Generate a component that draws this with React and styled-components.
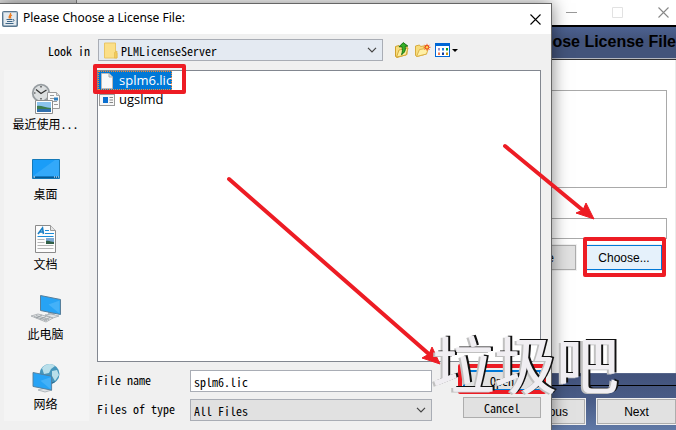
import React from 'react';
import styled, { createGlobalStyle } from 'styled-components';

const GlobalStyle = createGlobalStyle`
  * {
    box-sizing: border-box;
  }
  body {
    margin: 0;
    font-family: "Liberation Sans", "Noto Sans CJK SC", sans-serif;
    font-size: 12px;
    color: #000;
  }
  button, input, select, textarea {
    font: inherit;
    color: inherit;
    margin: 0;
    border-radius: 0;
  }
`;

const Desktop = styled.div`
  position: relative;
  display: flex;
  min-height: 100vh;
  overflow: hidden;
  background: #dcdcdc;
`;

/* installer window */

const Installer = styled.section`
  flex: 1;
  display: flex;
  flex-direction: column;
  margin-left: 76px;
  border-left: 1px solid #8a8a8a;
  background: #fff;
`;

const InstallerBar = styled.div`
  display: flex;
  align-items: center;
  justify-content: flex-end;
  gap: 33px;
  height: 25px;
  padding-right: 6px;
`;

const WindowButton = styled.button`
  display: flex;
  align-items: center;
  justify-content: center;
  width: 13px;
  height: 13px;
  padding: 0;
  border: 0;
  background: none;
`;

const Banner = styled.h1`
  height: 35px;
  margin: 0;
  border-top: 2px solid #000;
  border-bottom: 1px solid #333;
  box-shadow: inset 0 -1px 0 #b5b8c0;
  background: linear-gradient(#4c6190, #43547b 40%, #43547b);
  font-size: 16px;
  line-height: 29px;
  text-align: right;
  white-space: nowrap;
`;

const InstallerMain = styled.div`
  flex: 1;
  padding: 30px 8px 0 9px;
  border-right: 1px solid #ececec;
`;

const Message = styled.textarea`
  display: block;
  width: 100%;
  height: 98px;
  border: 1px solid #a9a9a9;
  background: #fff;
  resize: none;
`;

const PathInput = styled.input`
  display: block;
  width: 100%;
  height: 21px;
  margin-top: 30px;
  border: 1px solid #a9a9a9;
  background: #fff;
`;

const PathActions = styled.div`
  display: flex;
  justify-content: flex-end;
  gap: 10px;
  padding: 6px 5px 0 0;
`;

const InstallerButton = styled.button`
  position: relative;
  min-width: ${(p) => p.$width || 76}px;
  height: 25px;
  padding: 0 ${(p) => p.$pad || 8}px;
  border: 1px solid ${(p) => (p.$active ? '#0078d7' : '#adadad')};
  box-shadow: 0 0 0 1px #f0f0f0;
  background: ${(p) => (p.$active ? '#e5f1fb' : '#e1e1e1')};
  white-space: nowrap;
`;

const InstallerFooter = styled.div`
  height: 57px;
  border-top: 1px solid #56658a;
  background: linear-gradient(#42527b, #4a5d88 50%, #6079a6);
`;

const FooterActions = styled.div`
  display: flex;
  justify-content: flex-end;
  gap: 12px;
  margin-top: 11px;
  padding-top: 13px;
  border-top: 1px solid #000;
`;

/* file chooser window */

const Dialog = styled.section`
  position: absolute;
  top: 3px;
  left: 0;
  right: 124px;
  bottom: 0;
  display: flex;
  flex-direction: column;
  border-top: 1px solid #666;
  border-right: 1px solid #666;
  background: #f0f0f0;
  box-shadow: 0 0 16px rgba(0, 0, 0, 0.5);
  font-family: "Noto Sans CJK SC", sans-serif;
`;

const TitleBar = styled.header`
  display: flex;
  align-items: center;
  height: 30px;
  padding: 0 9px 0 2px;
  background: #fff;
  h2 {
    flex: 1;
    margin: 0 0 0 5px;
    font: 400 12px/20px "Noto Sans", sans-serif;
    padding-bottom: 2px;
  }
`;

const Toolbar = styled.div`
  display: flex;
  align-items: center;
  padding: 5px 93px 9px 0;
`;

const LookLabel = styled.label`
  width: 90px;
  margin-right: 8px;
  text-align: right;
  font-feature-settings: "hwid" 1;
`;

const ComboBox = styled.div`
  flex: 1;
  display: flex;
  align-items: center;
  min-width: 0;
  height: 22px;
  padding: 0 5px 0 ${(p) => (p.$icon ? 5 : 0)}px;
  border: 1px solid #a9adb5;
  background: ${(p) => (p.$icon ? '#e4eaf2' : '#e1e1e1')};
  select {
    flex: 1;
    min-width: 0;
    height: 20px;
    padding: 0 3px;
    border: 0;
    background: transparent;
    appearance: none;
    font-feature-settings: "hwid" 1;
  }
`;

const Tools = styled.div`
  display: flex;
  align-items: center;
  gap: 4px;
  margin-left: 12px;
`;

const ToolButton = styled.button`
  display: flex;
  align-items: center;
  padding: 0;
  border: 0;
  background: none;
`;

const Body = styled.div`
  flex: 1;
  display: grid;
  grid-template-columns: 85px 1fr;
  gap: 8px;
  padding: 0 10px 9px 4px;
`;

const Places = styled.nav`
  display: flex;
  flex-direction: column;
  gap: 20px;
  padding: 13px 2px 0 0;
  background: #f4f4f4;
`;

const Place = styled.button`
  display: flex;
  flex-direction: column;
  align-items: center;
  padding: 0;
  border: 0;
  background: none;
  line-height: 18px;
  white-space: nowrap;
  font-feature-settings: "hwid" 1;
`;

const Content = styled.div`
  display: flex;
  flex-direction: column;
  gap: 8px;
`;

const FileList = styled.ul`
  flex: 1;
  margin: 0;
  padding: 0;
  border: 1px solid #828790;
  background: #fff;
  list-style: none;
  font: 13px/19px "Open Sans", sans-serif;
`;

const FileItem = styled.li`
  position: relative;
  display: flex;
  align-items: center;
  gap: 4px;
  width: max-content;
  height: 19px;
  padding-left: 1px;
  outline: ${(p) => (p.$selected ? '1px dotted #ff8728' : 'none')};
  outline-offset: -1px;
  background: ${(p) => (p.$selected ? '#0078d7' : 'none')};
  color: ${(p) => (p.$selected ? '#fff' : '#000')};
`;

const Form = styled.form`
  display: flex;
  gap: 31px;
`;

const Fields = styled.div`
  flex: 1;
  display: grid;
  grid-template-columns: 93px 1fr;
  align-items: center;
  row-gap: 7px;
  font-feature-settings: "hwid" 1;
  label {
    padding-bottom: 3px;
  }
`;

const FileInput = styled.input`
  width: 100%;
  height: 22px;
  padding: 0 3px;
  border: 1px solid #a9adb5;
  background: #fff;
  font-feature-settings: "hwid" 1;
`;

const Buttons = styled.div`
  display: flex;
  flex-direction: column;
  gap: 6px;
`;

const DialogButton = styled.button`
  position: relative;
  width: 78px;
  height: 21px;
  padding: 0;
  border: ${(p) => (p.$primary ? '2px solid #0078d7' : '1px solid #adadad')};
  background: #e1e1e1;
  line-height: 16px;
  font-feature-settings: "hwid" 1;
`;

/* annotations */

const Mark = styled.span`
  position: absolute;
  inset: ${(p) => p.$inset};
  border: 4px solid #ed1c24;
  border-radius: 2px;
  pointer-events: none;
`;

const Arrows = styled.svg`
  position: absolute;
  inset: 0;
  width: 100%;
  height: 100%;
  pointer-events: none;
`;

const Watermark = styled.div`
  position: absolute;
  left: 433px;
  top: 331px;
  font: 400 62px/62px "Noto Sans CJK SC", sans-serif;
  color: #f0eef2;
  text-shadow: -1px 0 0 #f0eef2, 2px -1px 0 #111, -3px 1px 0 #c0c0c0;
  white-space: nowrap;
  pointer-events: none;
`;

const CrossIcon = ({ size, color }) => (
  <svg width={size} height={size} viewBox="0 0 11 11" stroke={color} strokeWidth="1.1">
    <path d="M.5.5l10 10M10.5.5l-10 10" />
  </svg>
);

const ChevronIcon = () => (
  <svg width="10" height="6" viewBox="0 0 10 6" fill="none" stroke="#444" strokeWidth="1.2">
    <path d="M1 .8l4 4 4-4" />
  </svg>
);

const JavaIcon = () => (
  <svg width="16" height="16" viewBox="0 0 16 16" fill="none">
    <defs>
      <linearGradient id="java" x2="0" y2="1">
        <stop stopColor="#8fa6b8" />
        <stop offset="1" stopColor="#456a86" />
      </linearGradient>
    </defs>
    <rect x=".5" y=".5" width="15" height="15" rx="1" fill="url(#java)" stroke="#5b7890" />
    <rect x="1.500" y="1.500" width="13" height="13" fill="#e3eaef" />
    <path d="M8.500 2c1 2-3 3-1 5.500M10 4c-2 1-2 2-1 3.500" stroke="#ee7b1d" strokeWidth="1.300" />
    <path d="M4.500 8.500h6M5 10.500h5M3.500 12.500h8M11 8.500c2 0 1 2-.5 2" stroke="#3d6688" />
  </svg>
);

const FolderIcon = () => (
  <svg width="14" height="17" viewBox="0 0 14 17">
    <path d="M.5 1h11v9l1.500 1v5H.5z" fill="#fbdf88" stroke="#e9c666" />
    <path d="M10.500 10.500l2.500-1.500v7h-2.500z" fill="#f2cb5c" stroke="#dfb548" strokeWidth=".6" />
  </svg>
);

const UpFolderIcon = () => (
  <svg width="16" height="16" viewBox="0 0 16 16">
    <path d="M.5 4.500l3.500-1 1 1.500 7-1v8.500L2 15.500l-1.500-1z" fill="#f7dc7c" stroke="#d0a02c" />
    <path d="M1.500 15l2.500-7 9-2-2 7z" fill="#fdee9e" stroke="#d6aa38" />
    <path d="M4 4.800L8.200.6l4.600 3.400-2.600.2c.6 4-.3 6.300-3.700 8.500 1.200-3 1-5.200.4-8.100z" fill="#35b026" stroke="#126b12" strokeWidth=".9" />
  </svg>
);

const NewFolderIcon = () => (
  <svg width="16" height="16" viewBox="0 0 16 16">
    <path d="M.5 4l4-1 1 1.500 6-1V12L2 14.500l-1.500-1z" fill="#f7dc7c" stroke="#d8ac3e" />
    <path d="M1.500 14.500L4.500 7.500l9-1.500-2 6z" fill="#fff0a6" stroke="#dcb248" />
    <path d="M12 1.800v7M9.500 2.800l5 5M9.500 7.800l5-5M8.500 5.300h7" stroke="#f26a2b" strokeWidth="1" />
    <circle cx="12" cy="5.300" r="1.800" fill="#ffd94a" stroke="#ea3c1b" />
  </svg>
);

const ViewIcon = () => (
  <svg width="23" height="16" viewBox="0 0 23 16">
    <rect x=".5" y="1.500" width="14" height="13" fill="#fff" stroke="#0067d6" />
    <path d="M0 1h15v3H0z" fill="#0067d6" />
    <path d="M3 6h2v2.500H3z" fill="#9a92c8" />
    <path d="M7 6h2v2.500H7z" fill="#1d82dd" />
    <path d="M11 6h2v2.500h-2z" fill="#12a01c" />
    <path d="M3 10.500h2V13H3z" fill="#f07a50" />
    <path d="M7 10.500h2V13H7z" fill="#103a9c" />
    <path d="M11 10.500h2V13h-2z" fill="#c89a10" />
    <path d="M17 7h6l-3 3z" fill="#000" />
  </svg>
);

const PageIcon = () => (
  <svg width="16" height="16" viewBox="0 0 16 16">
    <path d="M2.500.5h7.500l3.500 3.500v11.500h-11z" fill="#f8f8f8" stroke="#b9b9b9" />
    <path d="M10 .5V4h3.500" fill="#ddd" stroke="#aaa" />
  </svg>
);

const AppIcon = () => (
  <svg width="16" height="16" viewBox="0 0 16 16">
    <rect x=".5" y="2.500" width="15" height="11" fill="#f7f7f7" stroke="#9b9b9b" />
    <rect x="4" y="5" width="5" height="6" fill="#0a6fd0" />
    <path d="M10.500 5.500h3.500M10.500 8h3.500M10.500 10.500h3.500" stroke="#888" />
  </svg>
);

const RecentIcon = () => (
  <svg width="32" height="32" viewBox="0 0 32 32">
    <circle cx="11" cy="10" r="8.300" fill="#dcdfe0" stroke="#979da1" strokeWidth="1.800" />
    <path d="M6 6.500l5 4 5.500-3.500M11 3v1.500M11 15v1.500M4 10h1.500" fill="none" stroke="#333" strokeWidth="1.200" />
    <path d="M17.500 9.500h9l3 3v13h-12z" fill="#fafafa" stroke="#9a9a9a" />
    <path d="M26.500 9.500v3h3" fill="#ddd" stroke="#aaa" />
    <path d="M20 12.500h4M20 15.500h7M20 18.500h7M24 21.500h4" stroke="#9a9a9a" />
    <path d="M24 14.500h4v3h-4z" fill="#2e7fc0" />
    <path d="M5.500 17.500h17v13h-17z" fill="#fff" stroke="#8e8e8e" />
    <path d="M7 19h14v10H7z" fill="#8cc4ee" />
    <path d="M7 23c4-1 8 2 14 2v1H7z" fill="#3c7c50" />
    <path d="M7 26h14v3H7z" fill="#2f6fae" />
  </svg>
);

const DesktopIcon = () => (
  <svg width="32" height="32" viewBox="0 0 32 32">
    <path d="M2.500 6.500h27v19h-27z" fill="#1a9df8" stroke="#1479b8" />
    <path d="M3 23L25 7h4v16z" fill="#3eaefb" opacity=".7" />
    <path d="M3 23.500h26v1.500H3z" fill="#075993" />
    <path d="M3.500 24h1.500M24 24h1M26 24h1M28 24h1" stroke="#fff" />
  </svg>
);

const DocumentIcon = () => (
  <svg width="32" height="32" viewBox="0 0 32 32" fill="none">
    <path d="M5.500 2.500h15l5 5v22h-20z" fill="#fcfcfc" stroke="#8a8a8a" />
    <path d="M20.500 2.500v5h5" fill="#e5e5e5" stroke="#999" />
    <path d="M8 11l4.500-6 1 6M9.500 9h4" stroke="#1b7fc4" strokeWidth="1.600" />
    <path d="M15 7.500h4M15 10.500h9M7.500 13.500h16" stroke="#1b8cd8" />
    <path d="M7.500 16.500h7M7.500 19.500h7M7.500 22.500h16M7.500 25.500h16" stroke="#b5b5b5" />
    <path d="M16 15h8v6h-8z" fill="#7da9d3" />
    <path d="M16 18c3-1 5 1 8 1v2h-8z" fill="#315f46" />
  </svg>
);

const Monitor = () => (
  <>
    <path d="M0 0l20 4v15L0 15z" fill="#27a3f5" stroke="#577f9b" />
    <path d="M19 5v13L8 9z" fill="#62c0fc" opacity=".5" />
  </>
);

const ComputerIcon = () => (
  <svg width="32" height="32" viewBox="0 0 32 32">
    <path d="M18 19h6l1 4h-7z" fill="#b9c0c5" />
    <path d="M15 22l6-1 8 2-6 2z" fill="#dfe3e6" stroke="#9aa3aa" strokeWidth=".7" />
    <g transform="translate(10.500 2.500)">
      <Monitor />
    </g>
    <path d="M1 23l7-2 15 4-7 4z" fill="#e2e4e6" stroke="#a3a8ac" strokeWidth=".8" />
    <path d="M4 23.500l13 4M6 22.500l13 4M6 25l6-3M10 26.500l6-3M14 27.500l6-3" stroke="#8f969b" strokeWidth=".7" />
  </svg>
);

const NetworkIcon = () => (
  <svg width="32" height="32" viewBox="0 0 32 32">
    <circle cx="19.500" cy="11" r="10" fill="#4596bc" />
    <path d="M12 5c4-5 10-5 13-2l-4 3-2 4-5 1zM22 8l5-1 2 5-4 6-3-5z" fill="#b9dfea" />
    <path d="M10 13c3 5 9 8 16 5-3 4-10 5-14 1z" fill="#2c6f93" />
    <path d="M13 23h6l1 4h-6z" fill="#b9c0c5" />
    <path d="M8 27l7-2 7 2-7 2z" fill="#dfe3e6" stroke="#9aa3aa" strokeWidth=".7" />
    <g transform="translate(3 9.500) scale(.93)">
      <Monitor />
    </g>
  </svg>
);

const places = [
  { name: '最近使用...', icon: <RecentIcon /> },
  { name: '桌面', icon: <DesktopIcon /> },
  { name: '文档', icon: <DocumentIcon /> },
  { name: '此电脑', icon: <ComputerIcon /> },
  { name: '网络', icon: <NetworkIcon /> },
];

function InstallerWindow() {
  return (
    <Installer>
      <InstallerBar>
        <WindowButton aria-label="Minimize">
          <svg width="11" height="11" stroke="#999"><path d="M0 5.500h11" /></svg>
        </WindowButton>
        <WindowButton aria-label="Maximize">
          <svg width="11" height="11" fill="none" stroke="#e2e2e2"><path d="M.5.5h10v10H.5z" /></svg>
        </WindowButton>
        <WindowButton aria-label="Close">
          <CrossIcon size={11} color="#888" />
        </WindowButton>
      </InstallerBar>
      <Banner>Choose License File</Banner>
      <InstallerMain>
        <Message aria-label="Message" readOnly />
        <PathInput aria-label="License file path" />
        <PathActions>
          <InstallerButton $pad={21}>Restore</InstallerButton>
          <InstallerButton $active>
            Choose...
            <Mark $inset="-9px -5px -8px -4px" />
          </InstallerButton>
        </PathActions>
      </InstallerMain>
      <InstallerFooter>
        <FooterActions>
          <InstallerButton $pad={16}>Previous</InstallerButton>
          <InstallerButton $width={79}>Next</InstallerButton>
        </FooterActions>
      </InstallerFooter>
    </Installer>
  );
}

function FileChooser() {
  return (
    <Dialog role="dialog" aria-labelledby="chooser-title">
      <TitleBar>
        <JavaIcon />
        <h2 id="chooser-title">Please Choose a License File:</h2>
        <WindowButton aria-label="Close">
          <CrossIcon size={11} color="#000" />
        </WindowButton>
      </TitleBar>
      <Toolbar>
        <LookLabel htmlFor="look-in">Look in</LookLabel>
        <ComboBox $icon>
          <FolderIcon />
          <select id="look-in">
            <option>PLMLicenseServer</option>
          </select>
          <ChevronIcon />
        </ComboBox>
        <Tools>
          <ToolButton aria-label="Up one level"><UpFolderIcon /></ToolButton>
          <ToolButton aria-label="New folder"><NewFolderIcon /></ToolButton>
          <ToolButton aria-label="View menu"><ViewIcon /></ToolButton>
        </Tools>
      </Toolbar>
      <Body>
        <Places>
          {places.map((place) => (
            <Place key={place.name}>
              {place.icon}
              {place.name}
            </Place>
          ))}
        </Places>
        <Content>
          <FileList role="listbox" aria-label="Files">
            <FileItem role="option" aria-selected="true" $selected>
              <PageIcon />
              splm6.lic
              <Mark $inset="-7px -14px -4px -5px" />
            </FileItem>
            <FileItem role="option" aria-selected="false">
              <AppIcon />
              ugslmd
            </FileItem>
          </FileList>
          <Form onSubmit={(e) => e.preventDefault()}>
            <Fields>
              <label htmlFor="file-name">File name</label>
              <FileInput id="file-name" defaultValue="splm6.lic" />
              <label htmlFor="file-type">Files of type</label>
              <ComboBox>
                <select id="file-type">
                  <option>All Files</option>
                </select>
                <ChevronIcon />
              </ComboBox>
            </Fields>
            <Buttons>
              <DialogButton type="submit" $primary>
                Open
                <Mark $inset="-8px -7px -5px -7px" />
              </DialogButton>
              <DialogButton type="button">Cancel</DialogButton>
            </Buttons>
          </Form>
        </Content>
      </Body>
    </Dialog>
  );
}

function App() {
  return (
    <Desktop>
      <GlobalStyle />
      <InstallerWindow />
      <FileChooser />
      <Arrows fill="#ed1c24" stroke="#ed1c24">
        <path d="M229 179L430 355M505 146L585 212" strokeWidth="4" strokeLinecap="round" />
        <path d="M440 364L422 358L429 354L432 347zM594 219L576 213L583 210L586 203z" strokeWidth="1" />
      </Arrows>
      <Watermark>垃圾吧</Watermark>
    </Desktop>
  );
}

export default App;
